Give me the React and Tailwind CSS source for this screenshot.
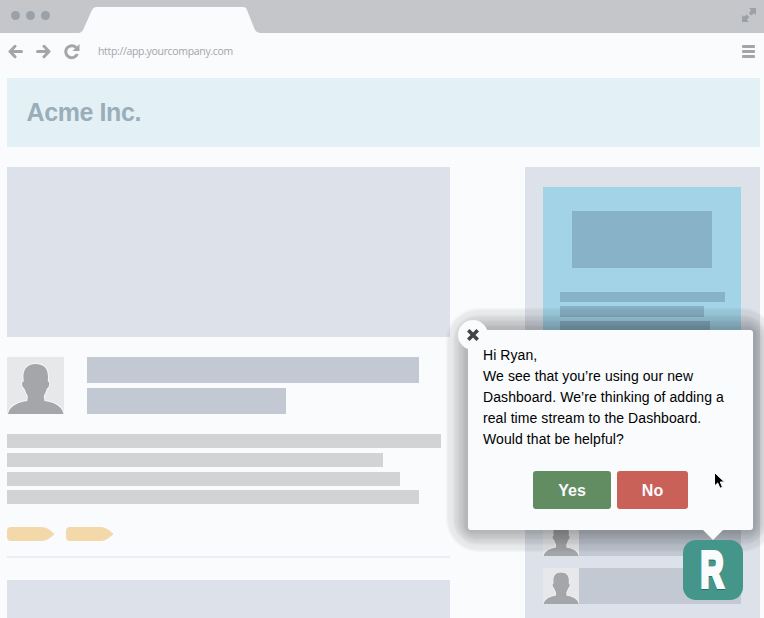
function Avatar({ className }) {
  return (
    <svg viewBox="0 0 57 57" className={className}>
      <rect width="57" height="57" fill="#e7e8ea" />
      <path
        d="M28.500 7C20 7 16.200 12.500 16.400 20L16.700 24.500C14.700 24.500 14.800 27.500 15.700 29.500C16.400 31.200 17.300 31 17.800 32.500C18.500 35.500 20.500 37.500 20.800 39.500L20.300 44C12 45 2.500 48.500 1 57H56.500C55 48.500 46 45 37.500 44L36.800 39.500C37 37.500 39 35.500 39.600 32.500C40 31 41 31.200 41.700 29.500C42.500 27.500 42.600 24.500 40.800 24.500L41 20C41 12 37.500 7 28.500 7Z"
        fill="#a5a6aa"
        stroke="#f9fbfd"
        strokeWidth="1.600"
        paintOrder="stroke"
      />
    </svg>
  );
}

function Tag() {
  return (
    <svg width="48" height="14" viewBox="0 0 48 14">
      <path d="M4 0H34C40 0 43 3 47.500 7C43 11 40 14 34 14H4Q0 14 0 10V4Q0 0 4 0Z" fill="#f3d8aa" />
    </svg>
  );
}

function TitleBar() {
  return (
    <div className="flex h-[33px] shrink-0 items-start bg-[#c5c6ca]">
      <div className="flex gap-[6px] pt-[11px] pl-[11px]">
        <span className="size-[9px] rounded-full bg-[#9aa1a8]" />
        <span className="size-[9px] rounded-full bg-[#9aa1a8]" />
        <span className="size-[9px] rounded-full bg-[#9aa1a8]" />
      </div>
      <svg width="182" height="33" viewBox="0 0 182 33" className="ml-[29px]">
        <path d="M0 33Q3 32.500 4.500 29L13 10Q14.500 7 17.500 7H164Q167 7 168 10L175.500 29Q177 32.500 181 33Z" fill="#f9fbfd" />
      </svg>
      <svg width="14" height="14" viewBox="0 0 14 14" className="mt-[8px] mr-[8px] ml-auto" fill="#9aa1a8">
        <path d="M7 0H14V7L12.200 5.200L9.300 7.600L6.900 5.200L9 2Z" />
        <path d="M7 14H0V7L1.800 8.800L4.700 6.400L7.100 8.800L5 12Z" />
      </svg>
    </div>
  );
}

function Toolbar() {
  return (
    <div className="flex h-[45px] shrink-0 items-start pt-[11px] pl-[8px]">
      <svg width="15" height="15" viewBox="0 0 15 15" fill="none" stroke="#a5a5a7" strokeWidth="3" strokeLinecap="round" strokeLinejoin="round">
        <path d="M7 2.300L2 7.500L7 12.700M2.500 7.500H13.500" />
      </svg>
      <svg width="15" height="15" viewBox="0 0 15 15" className="ml-[13px]" fill="none" stroke="#a5a5a7" strokeWidth="3" strokeLinecap="round" strokeLinejoin="round">
        <path d="M8 2.300L13 7.500L8 12.700M12.500 7.500H1.500" />
      </svg>
      <svg width="16" height="16" viewBox="0 0 16 16" className="ml-[12.500px]" fill="none">
        <path d="M12.200 3.700A6 6 0 1 0 13.300 10" stroke="#a5a5a7" strokeWidth="3" />
        <path d="M15.500 0V7H8.500Z" fill="#a5a5a7" />
      </svg>
      <span className="ml-[18.500px] font-['Open_Sans',sans-serif] text-[10.500px] leading-[15px] tracking-[-0.330px] text-[#a5a5a7]">
        http://app.yourcompany.com
      </span>
      <div className="mt-[1px] mr-[9px] ml-auto flex w-[13px] flex-col gap-[2px]">
        <span className="h-[3px] rounded-[1px] bg-[#a5a5a7]" />
        <span className="h-[3px] rounded-[1px] bg-[#a5a5a7]" />
        <span className="h-[3px] rounded-[1px] bg-[#a5a5a7]" />
      </div>
    </div>
  );
}

function Feed() {
  return (
    <div className="w-[443px] shrink-0">
      <div className="h-[170px] bg-[#dde1e9]" />
      <div className="mt-[20px] flex h-[57px]">
        <Avatar className="size-[57px]" />
        <div className="ml-[23px] flex flex-col justify-between">
          <div className="h-[26px] w-[332px] bg-[#c2c9d3]" />
          <div className="h-[26px] w-[199px] bg-[#c2c9d3]" />
        </div>
      </div>
      <div className="mt-[20px] flex flex-col gap-[5px]">
        <div className="h-[14px] w-[434px] bg-[#d2d3d5]" />
        <div className="h-[14px] w-[376px] bg-[#d2d3d5]" />
        <div className="h-[14px] w-[393px] bg-[#d2d3d5]" />
        <div className="-mt-[1px] h-[14px] w-[412px] bg-[#d2d3d5]" />
      </div>
      <div className="mt-[23px] flex gap-[11px]">
        <Tag />
        <Tag />
      </div>
      <div className="mt-[15px] h-[2px] bg-[#ebeef4]" />
      <div className="mt-[22px] h-[60px] bg-[#dde1e9]" />
    </div>
  );
}

function PersonRow() {
  return (
    <div className="flex h-[36px] bg-[#c2c9d3]">
      <Avatar className="size-[36px]" />
    </div>
  );
}

function Sidebar() {
  return (
    <div className="w-[235px] shrink-0 bg-[#dde1e9] pt-[20px] pr-[19px] pl-[18.400px]">
      <div className="h-[310px] bg-[#a2d3e7] pt-[24px]">
        <div className="ml-[29px] h-[57px] w-[139.500px] bg-[#88b2c7]" />
        <div className="mt-[23.500px] ml-[17px] flex flex-col gap-[4px]">
          <div className="h-[10.500px] w-[165px] bg-[#88b2c7]" />
          <div className="h-[10.500px] w-[143.500px] bg-[#88b2c7]" />
          <div className="h-[10.500px] w-[150px] bg-[#88b2c7]" />
        </div>
      </div>
      <div className="mt-[23px] flex flex-col gap-[12px]">
        <PersonRow />
        <PersonRow />
      </div>
    </div>
  );
}

/* Stepped halo around the popup, from the widest, faintest ring inwards. */
function PopupHalo() {
  return (
    <div className="absolute top-[330px] left-[468px] h-[200px] w-[285px]">
      <div className="absolute -inset-[21px] rounded-[32px] bg-black/7 blur-[1px]" />
      <div className="absolute -inset-[14px] rounded-[24px] bg-black/8 blur-[1px]" />
      <div className="absolute -inset-[9px] rounded-[17px] bg-black/7 blur-[1px]" />
      <div className="absolute -inset-[4px] rounded-[9px] bg-black/8 blur-[1px]" />
    </div>
  );
}

function Popup() {
  return (
    <div className="absolute top-[330px] left-[468px] h-[200px] w-[285px] rounded-[3px] bg-[#f9fbfd] pt-[15px] pl-[15px]">
      <button className="absolute -top-[10px] -left-[10px] flex size-[30px] items-center justify-center rounded-full bg-[#f9fbfd]">
        <svg width="12" height="12" viewBox="0 0 12 12" stroke="#424446" strokeWidth="3.600" strokeLinecap="butt">
          <path d="M1.300 1.300L10.700 10.700M10.700 1.300L1.300 10.700" />
        </svg>
      </button>
      <p className="text-[14px] leading-[21px] tracking-[0.080px] whitespace-nowrap text-black">
        Hi Ryan,
        <br />
        We see that you’re using our new
        <br />
        Dashboard. We’re thinking of adding a
        <br />
        real time stream to the Dashboard.
        <br />
        Would that be helpful?
      </p>
      <div className="mt-[21px] ml-[50px] flex gap-[6px] text-[16px] font-bold text-[#f9fbfd]">
        <button className="h-[38px] w-[78px] rounded-[3px] bg-[#628c62] pt-[1px]">Yes</button>
        <button className="h-[38px] w-[71px] rounded-[3px] bg-[#c96159] pt-[1px]">No</button>
      </div>
      <svg width="20" height="10" viewBox="0 0 20 10" className="absolute top-[200px] left-[235px]">
        <path d="M0 0H20L10 10Z" fill="#f9fbfd" />
      </svg>
    </div>
  );
}

function Launcher() {
  return (
    <div className="absolute top-[540px] left-[683px] size-[60px] overflow-hidden rounded-[13px] bg-[#45968a]">
      <svg width="60" height="60" viewBox="0 0 60 60" className="font-['Liberation_Sans',Arial,sans-serif] font-bold">
        <g strokeWidth="4" strokeLinejoin="miter">
          <text transform="translate(17.500 47.900) scale(0.640 1)" fontSize="50" fill="#2f6b64" stroke="#2f6b64">R</text>
          <text transform="translate(17.500 46.700) scale(0.640 1)" fontSize="50" fill="#f9fbfd" stroke="#f9fbfd">R</text>
        </g>
      </svg>
    </div>
  );
}

function Cursor() {
  return (
    <svg width="13" height="19" viewBox="0 0 13 19" className="absolute top-[471px] left-[713px]">
      <path d="M1.500 1.500V15L4.700 12L7 17.300L9.500 16.200L7.300 11H11.500Z" fill="#000" stroke="#fff" strokeWidth="1" />
    </svg>
  );
}

export default function App() {
  return (
    <div className="relative flex h-[618px] w-[764px] flex-col overflow-hidden bg-[#f9fbfd] font-['Liberation_Sans',Arial,sans-serif]">
      <TitleBar />
      <Toolbar />
      <header className="mr-[4px] ml-[7px] flex h-[69px] shrink-0 items-center bg-[#e3f1f6] pl-[19.500px]">
        <h1 className="-mt-[1px] text-[25px] leading-[28px] font-bold tracking-[-0.400px] text-[#9badb9]">Acme Inc.</h1>
      </header>
      <main className="mt-[20px] mr-[4px] ml-[7px] flex h-[451px] shrink-0 justify-between overflow-hidden">
        <Feed />
        <Sidebar />
      </main>
      <PopupHalo />
      <Popup />
      <Launcher />
      <Cursor />
    </div>
  );
}
